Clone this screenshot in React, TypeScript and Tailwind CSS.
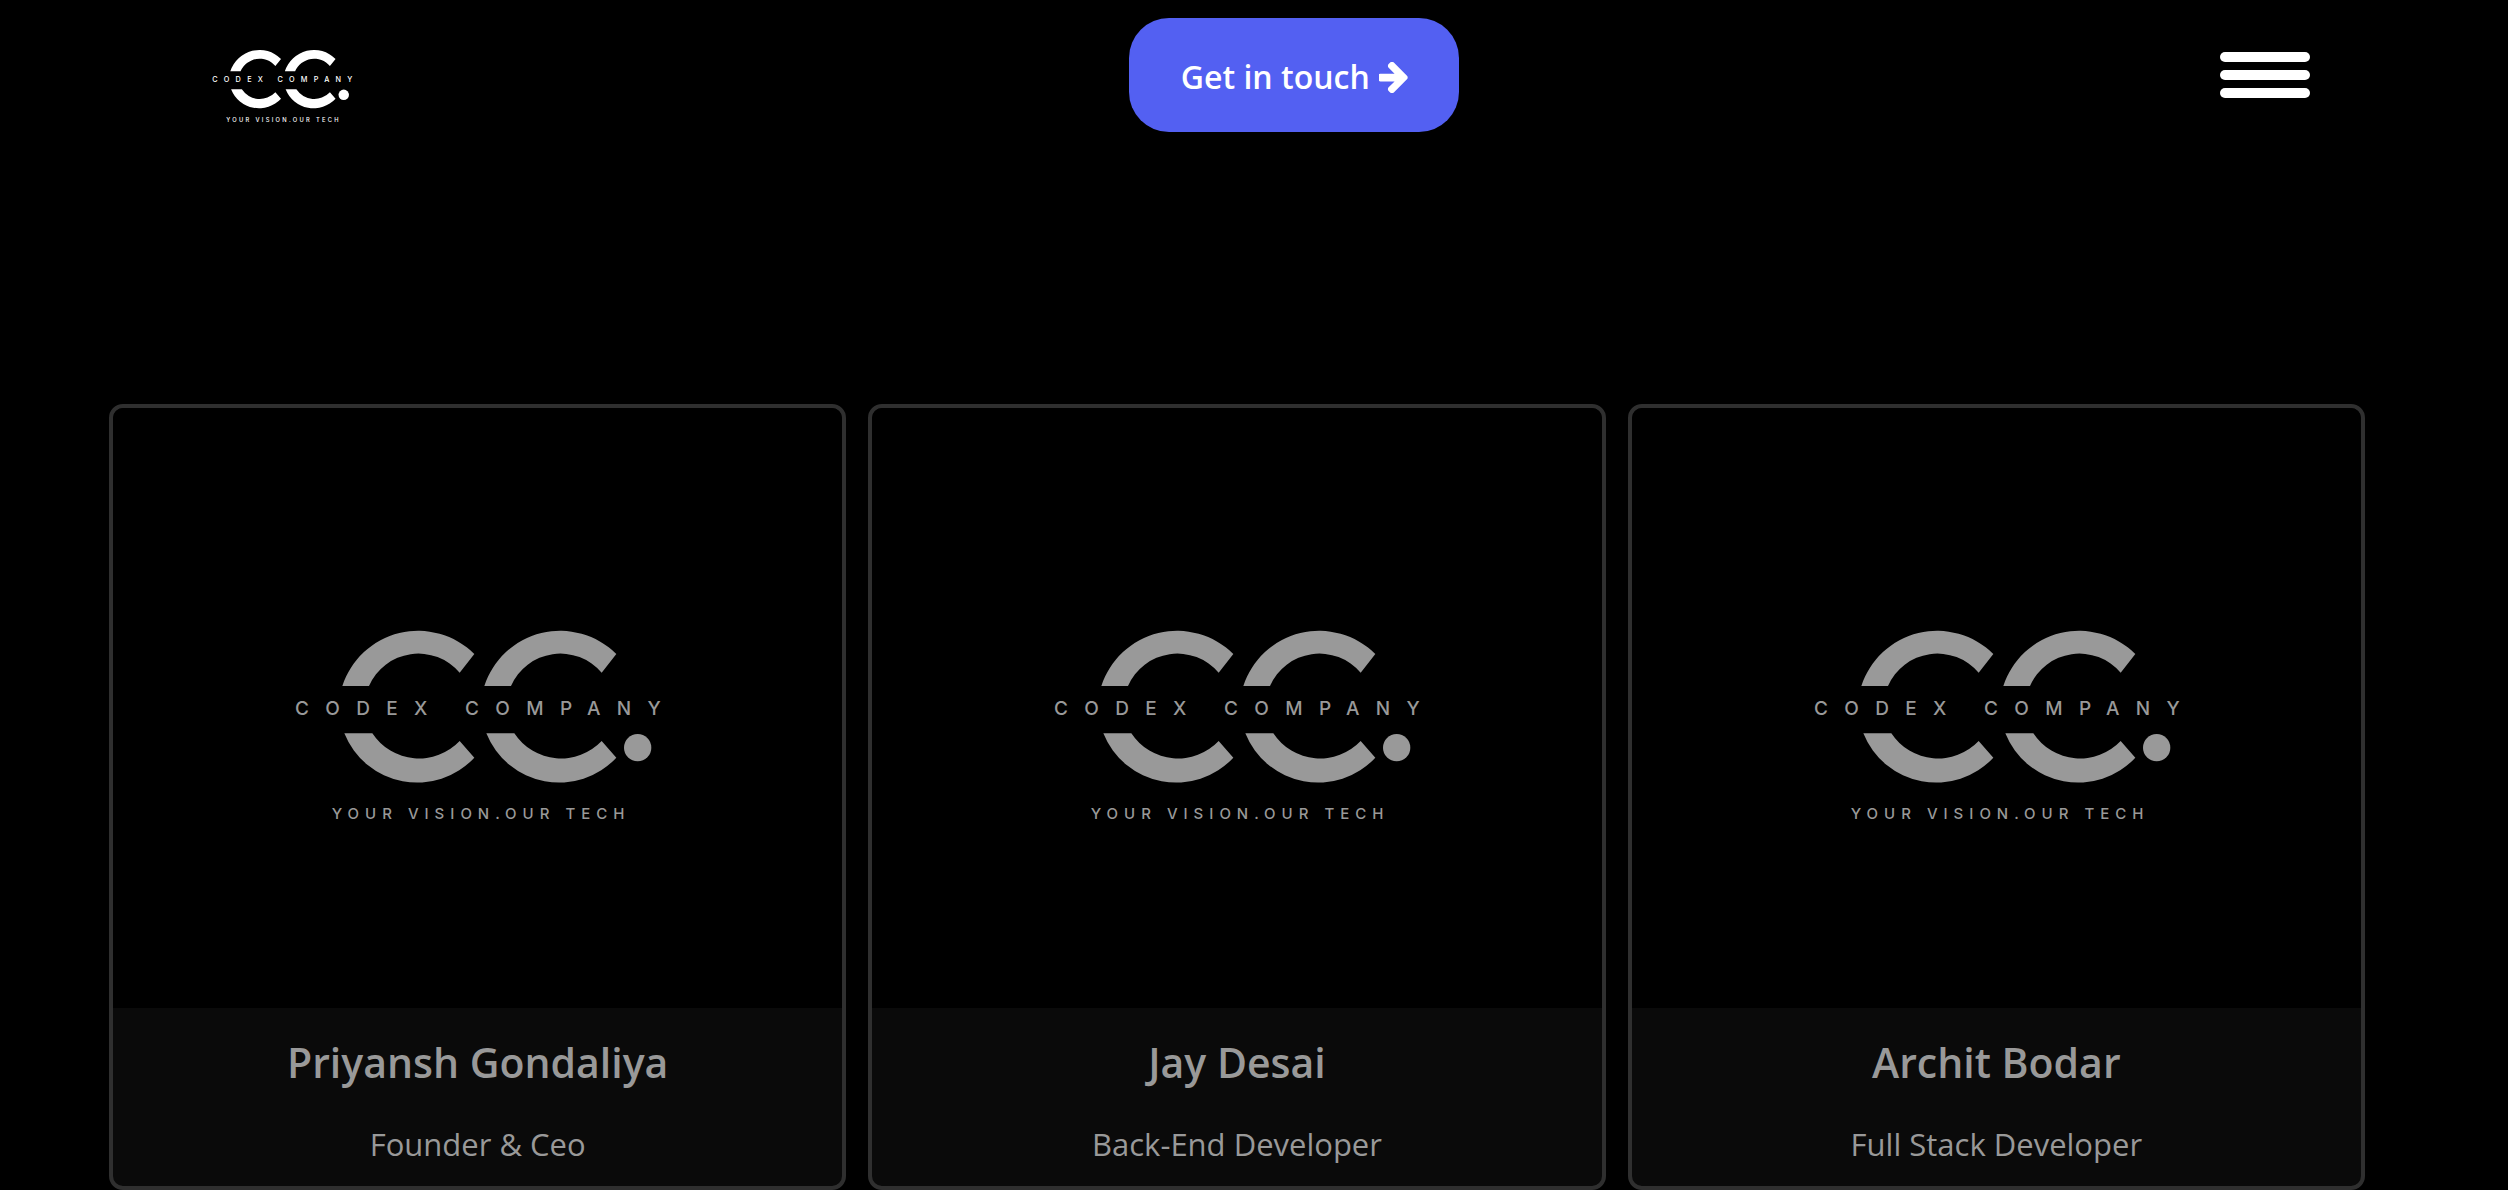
interface Member {
  name: string
  role: string
}

const members: Member[] = [
  { name: 'Priyansh Gondaliya', role: 'Founder & Ceo' },
  { name: 'Jay Desai', role: 'Back-End Developer' },
  { name: 'Archit Bodar', role: 'Full Stack Developer' },
]

const upperArc =
  'M189 228A239 239 0 0 1 585 132L541 188A162 162 0 0 0 269 228Z'
const lowerArc =
  'M195 370A235 235 0 0 0 585 443L541 393A168 168 0 0 1 279 370Z'

function Logo({ className }: { className: string }) {
  return (
    <svg
      viewBox="-40 0 1281 690"
      fill="currentColor"
      role="img"
      aria-label="Codex Company"
      className={className}
    >
      <path d={upperArc} />
      <path d={lowerArc} />
      <g transform="translate(426 0)">
        <path d={upperArc} />
        <path d={lowerArc} />
      </g>
      <circle cx="1075" cy="413" r="41" />
      <text x="47" y="316" className="font-['Inter'] text-[57px] font-medium tracking-[49px]">
        CODEX COMPANY
      </text>
      <text x="157" y="627" className="font-['Inter'] text-[45px] font-medium tracking-[18px]">
        YOUR VISION.OUR TECH
      </text>
    </svg>
  )
}

function ArrowIcon() {
  return (
    <svg viewBox="64 192 1408 1536" fill="currentColor" aria-hidden="true" className="h-[31px] w-[29px]">
      <path d="M1472 960q0 54-37 91l-651 651q-39 37-91 37-51 0-90-37l-75-75q-38-38-38-91t38-91l293-293h-704q-52 0-84.5-37.5t-32.5-90.5v-128q0-53 32.5-90.5t84.5-37.500h704l-293-294q-38-36-38-90t38-90l75-75q38-38 90-38 53 0 91 38l651 651q37 35 37 90z" />
    </svg>
  )
}

function Header() {
  return (
    <header className="flex items-start justify-between pt-[18px] pr-[7.9%] pl-[8%]">
      <a href="#home" className="w-[168px] pt-6 text-white">
        <Logo className="w-[164px]" />
      </a>
      <button
        type="button"
        className="flex h-[114px] w-[330px] items-center justify-center gap-[9px] rounded-[40px] bg-[#5360f2] pt-1 text-[32px] font-semibold text-white"
      >
        Get in touch
        <ArrowIcon />
      </button>
      <button type="button" aria-label="Open menu" className="mt-[34px] flex w-[90px] flex-col gap-2">
        <span className="h-2.5 w-full rounded-full bg-white" />
        <span className="h-2.5 w-full rounded-full bg-white" />
        <span className="h-2.5 w-full rounded-full bg-white" />
      </button>
    </header>
  )
}

function MemberCard({ member }: { member: Member }) {
  return (
    <article className="overflow-hidden rounded-[14px] border-4 border-[#2f2f2f] bg-[#0a0a0a] text-center text-[#999999]">
      <div className="flex h-[600px] items-center justify-center bg-black pt-[34px] pl-1">
        <Logo className="w-[427px]" />
      </div>
      <div className="flex h-[178px] flex-col items-center pt-[22px]">
        <h2 className="text-[41px] leading-[64px] font-semibold">{member.name}</h2>
        <p className="mt-5 text-[31px] leading-[60px]">{member.role}</p>
      </div>
    </article>
  )
}

export default function App() {
  return (
    <div className="min-h-screen bg-black font-['Open_Sans','Noto_Sans',sans-serif]">
      <Header />
      <main className="grid grid-cols-3 gap-[22px] pt-[272px] pr-[143px] pl-[109px]">
        {members.map((m) => (
          <MemberCard key={m.name} member={m} />
        ))}
      </main>
    </div>
  )
}
